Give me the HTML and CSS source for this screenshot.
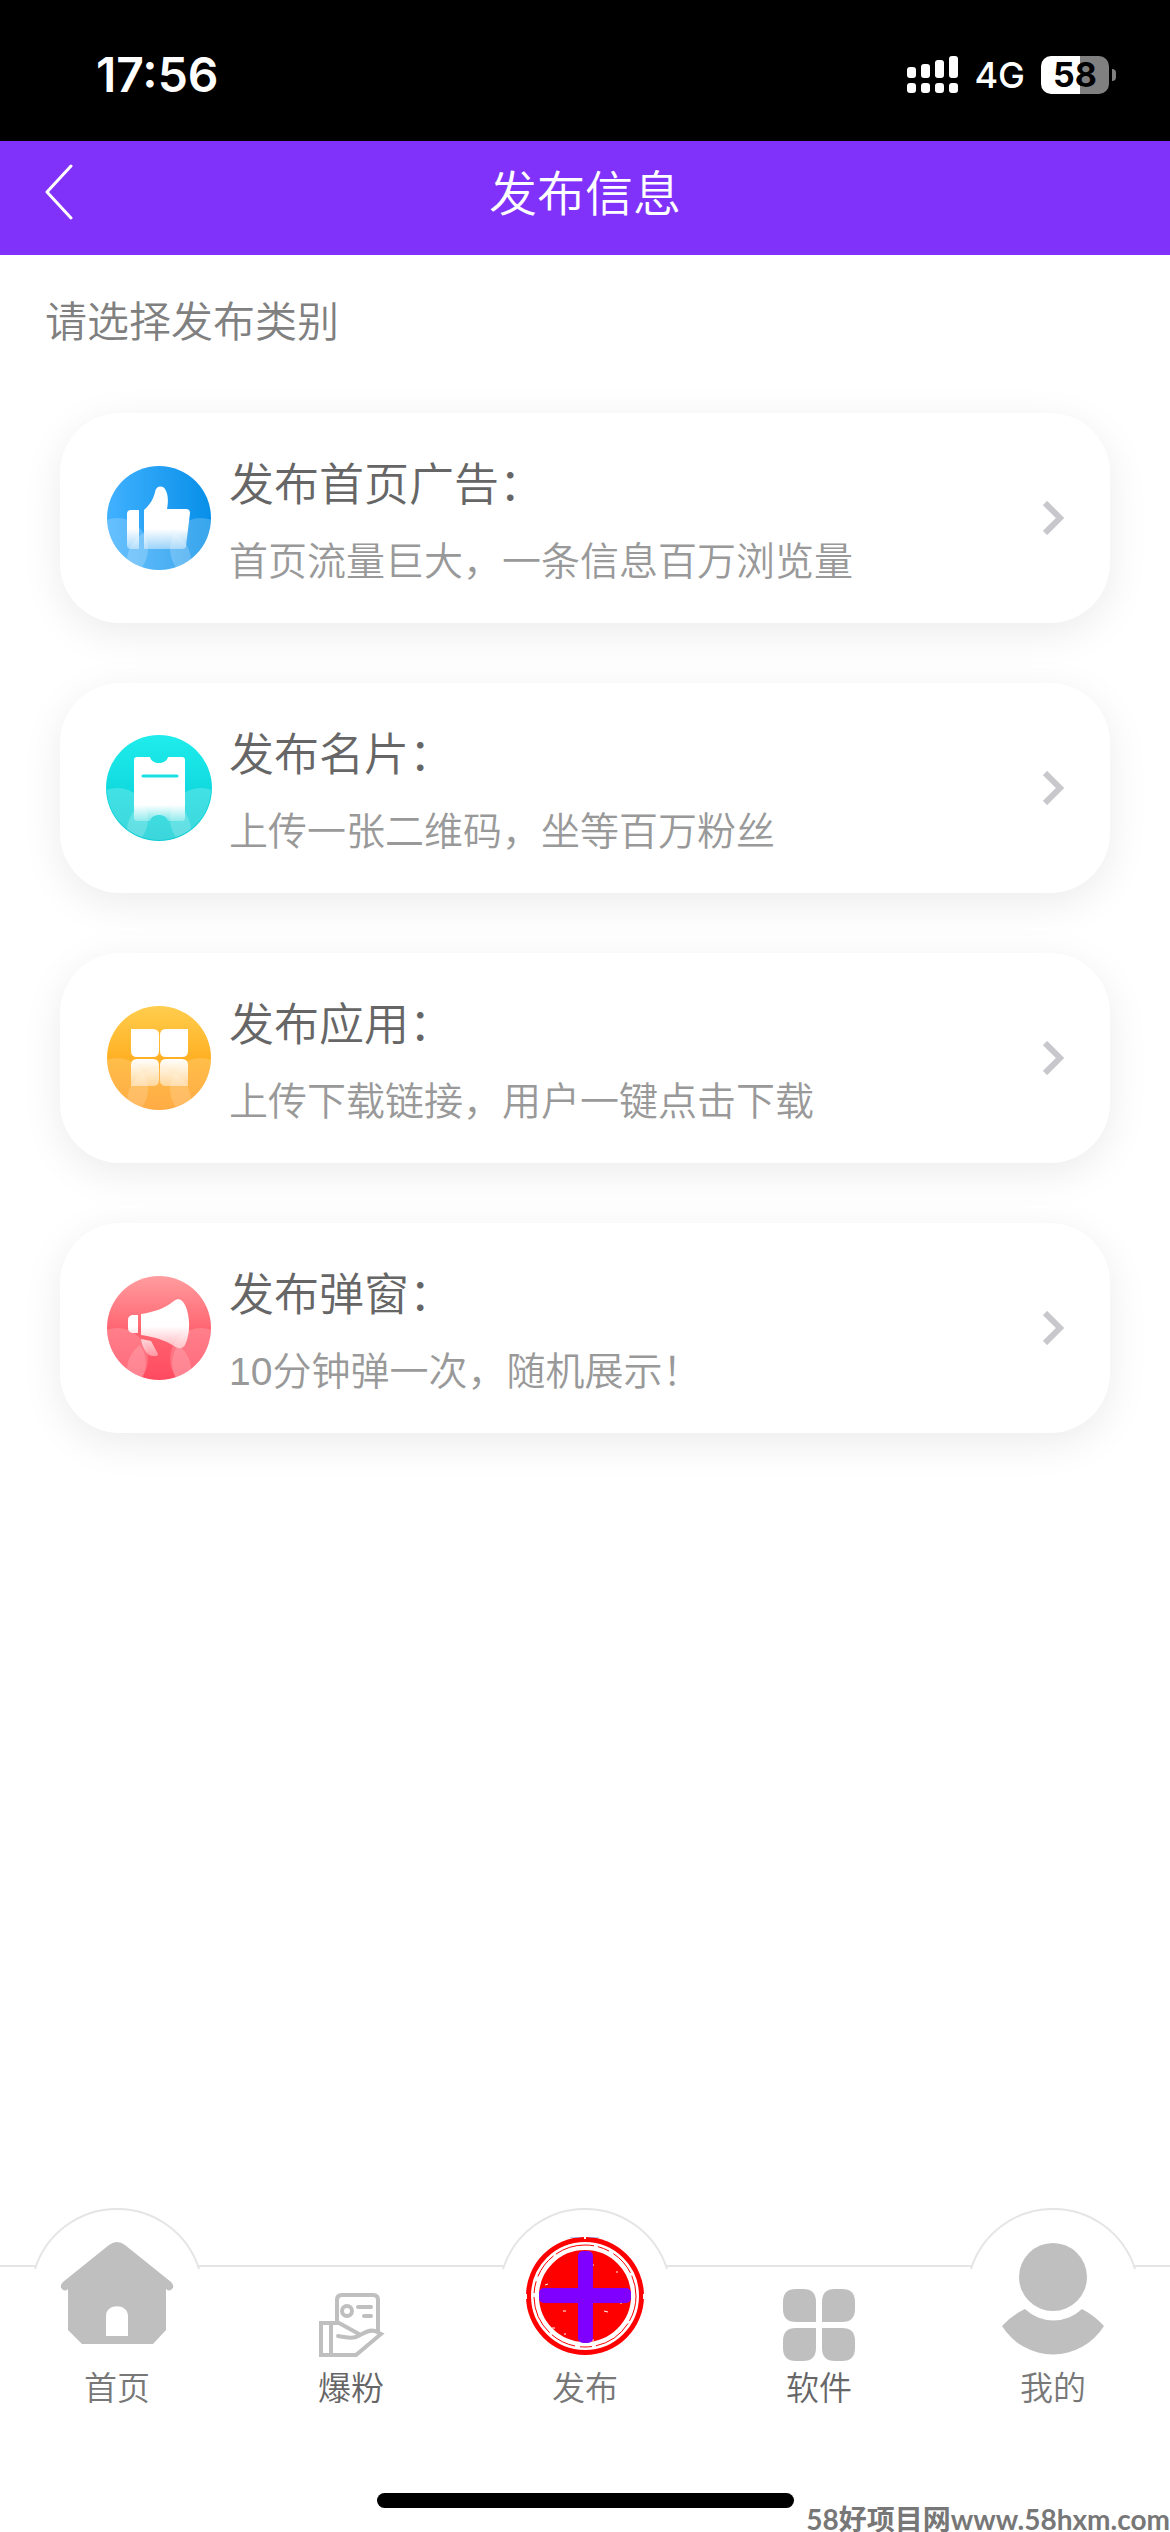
FILE: index.html
```
<!DOCTYPE html>
<html lang="zh-CN">
<head>
  <meta charset="UTF-8">
  <meta name="viewport" content="width=device-width, initial-scale=1.0">
  <title>发布信息</title>
  <link rel="stylesheet" href="styles.css">
</head>
<body>

  <div class="status-bar">
    <span class="time">17:56</span>
    <div class="status-right">
      <svg class="signal" viewBox="0 0 51 37" fill="#fff">
        <rect x="0" y="11" width="9" height="11" rx="3"/>
        <rect x="14" y="8" width="9" height="14" rx="3"/>
        <rect x="28" y="4" width="9" height="18" rx="3"/>
        <rect x="42" y="0" width="9" height="22" rx="3"/>
        <rect x="0" y="27" width="9" height="10" rx="3"/>
        <rect x="14" y="27" width="9" height="10" rx="3"/>
        <rect x="28" y="27" width="9" height="10" rx="3"/>
        <rect x="42" y="27" width="9" height="10" rx="3"/>
      </svg>
      <span class="network">4G</span>
      <span class="battery">58</span>
    </div>
  </div>

  <header class="header">
    <a class="back" href="#" aria-label="返回">
      <svg viewBox="0 0 28 56" fill="none" stroke="#fff" stroke-width="3" stroke-linecap="round" stroke-linejoin="round">
        <path d="M26 2L2 28l24 26"/>
      </svg>
    </a>
    <h1>发布信息</h1>
  </header>

  <main class="content">
    <p class="hint">请选择发布类别</p>

    <div class="card-list">
      <a class="card" href="#">
        <svg class="card-icon" viewBox="0 0 108 108">
          <defs>
            <clipPath id="round"><circle cx="54" cy="54" r="52"/></clipPath>
            <linearGradient id="blue"><stop offset="0" stop-color="#41b1ff"/><stop offset="1" stop-color="#078fe8"/></linearGradient>
            <linearGradient id="fadeBlue" gradientUnits="userSpaceOnUse" x1="0" y1="65" x2="0" y2="86"><stop offset="0" stop-color="#fff"/><stop offset="1" stop-color="#fff" stop-opacity=".4"/></linearGradient>
          </defs>
          <circle cx="54" cy="54" r="52" fill="url(#blue)"/>
          <g clip-path="url(#round)" fill="#fff" fill-opacity=".2">
            <circle cx="12" cy="85" r="31"/>
            <circle cx="96" cy="85" r="31"/>
            <circle cx="54" cy="97" r="32"/>
          </g>
          <g fill="url(#fadeBlue)">
            <path d="M34 46v39h-8q-4 0-4-4V50q0-4 4-4z"/>
            <path d="M39 46c7-6 10-13 11-18 1-6 7-7 10-3 4 6 3 15 2 20h19q4 0 4 4l-4 33q0 3-4 3H39z"/>
          </g>
        </svg>
        <div class="card-text">
          <h2>发布首页广告：</h2>
          <p>首页流量巨大，一条信息百万浏览量</p>
        </div>
        <svg class="arrow" viewBox="0 0 22 34"><path d="M2 2l15 15L2 32" fill="none" stroke="#c7c7cc" stroke-width="6"/></svg>
      </a>

      <a class="card" href="#">
        <svg class="card-icon" viewBox="0 0 108 108">
          <defs>
            <linearGradient id="teal" x2="0" y2="1"><stop offset="0" stop-color="#1feceb"/><stop offset=".5" stop-color="#12dbe0"/><stop offset="1" stop-color="#0bccd2"/></linearGradient>
            <linearGradient id="fadeTeal" gradientUnits="userSpaceOnUse" x1="0" y1="71" x2="0" y2="87"><stop offset="0" stop-color="#fff"/><stop offset="1" stop-color="#fff" stop-opacity=".3"/></linearGradient>
          </defs>
          <circle cx="54" cy="54" r="53" fill="url(#teal)"/>
          <g clip-path="url(#round)" fill="#fff" fill-opacity=".2">
            <circle cx="12" cy="85" r="31"/>
            <circle cx="96" cy="85" r="31"/>
            <circle cx="54" cy="97" r="32"/>
          </g>
          <path fill="url(#fadeTeal)" d="M32 23h13c2 8 16 8 18 0h14q3 0 3 3v58q0 3-3 3H63c-2-8-16-8-18 0H32q-3 0-3-3V26q0-3 3-3z"/>
          <path d="M38 42h34" stroke="#17dfe2" stroke-width="3" stroke-linecap="round"/>
        </svg>
        <div class="card-text">
          <h2>发布名片：</h2>
          <p>上传一张二维码，坐等百万粉丝</p>
        </div>
        <svg class="arrow" viewBox="0 0 22 34"><path d="M2 2l15 15L2 32" fill="none" stroke="#c7c7cc" stroke-width="6"/></svg>
      </a>

      <a class="card" href="#">
        <svg class="card-icon" viewBox="0 0 108 108">
          <defs>
            <linearGradient id="yellow" x2="0" y2="1"><stop offset="0" stop-color="#ffcd4d"/><stop offset=".5" stop-color="#ffb125"/><stop offset="1" stop-color="#ff9b1f"/></linearGradient>
            <linearGradient id="fadeYellow" gradientUnits="userSpaceOnUse" x1="0" y1="55" x2="0" y2="83"><stop offset="0" stop-color="#fff"/><stop offset="1" stop-color="#fff" stop-opacity=".45"/></linearGradient>
          </defs>
          <circle cx="54" cy="54" r="52" fill="url(#yellow)"/>
          <g clip-path="url(#round)" fill="#fff" fill-opacity=".17">
            <circle cx="12" cy="85" r="31"/>
            <circle cx="96" cy="85" r="31"/>
            <circle cx="54" cy="97" r="32"/>
          </g>
          <g fill="url(#fadeYellow)">
            <path d="M26 25h22q6 0 6 6v16q0 6-6 6H32q-6 0-6-6z"/>
            <path d="M83 25v22q0 6-6 6H61q-6 0-6-6V31q0-6 6-6z"/>
            <path d="M26 82V61q0-6 6-6h16q6 0 6 6v15q0 6-6 6z"/>
            <path d="M83 82H61q-6 0-6-6V61q0-6 6-6h16q6 0 6 6z"/>
          </g>
        </svg>
        <div class="card-text">
          <h2>发布应用：</h2>
          <p>上传下载链接，用户一键点击下载</p>
        </div>
        <svg class="arrow" viewBox="0 0 22 34"><path d="M2 2l15 15L2 32" fill="none" stroke="#c7c7cc" stroke-width="6"/></svg>
      </a>

      <a class="card" href="#">
        <svg class="card-icon" viewBox="0 0 108 108">
          <defs>
            <linearGradient id="red" x2="0" y2="1"><stop offset="0" stop-color="#ff9d9f"/><stop offset=".5" stop-color="#ff6672"/><stop offset="1" stop-color="#ff4a60"/></linearGradient>
            <linearGradient id="fadeRed" gradientUnits="userSpaceOnUse" x1="0" y1="52" x2="0" y2="86"><stop offset="0" stop-color="#fff"/><stop offset="1" stop-color="#fff" stop-opacity=".3"/></linearGradient>
          </defs>
          <circle cx="54" cy="54" r="52" fill="url(#red)"/>
          <g clip-path="url(#round)" fill="#fff" fill-opacity=".17">
            <circle cx="12" cy="85" r="31"/>
            <circle cx="96" cy="85" r="31"/>
            <path d="M22 97a32 32 0 0 1 13-26 31 31 0 0 1 2 33zM86 97a32 32 0 0 0-13-26 31 31 0 0 0-2 33z"/>
          </g>
          <g fill="url(#fadeRed)">
            <path d="M33 41v18h-6q-4-1-4-5v-8q0-4 4-5z"/>
            <path d="M36 40c14-2 24-6 33-13 4-3 8-2 11 4 5 10 6 28 0 40-2 4-7 4-11 1-9-6-20-9-33-11z"/>
            <path d="M36 65l10 2 7 13q0 2-3 2h-3q-3 0-5-3-5-6-6-14z"/>
          </g>
        </svg>
        <div class="card-text">
          <h2>发布弹窗：</h2>
          <p>10分钟弹一次，随机展示！</p>
        </div>
        <svg class="arrow" viewBox="0 0 22 34"><path d="M2 2l15 15L2 32" fill="none" stroke="#c7c7cc" stroke-width="6"/></svg>
      </a>
    </div>
  </main>

  <nav class="tab-bar">
    <a class="tab" href="#">
      <svg class="bump" viewBox="0 0 170 62"><path d="M3 61A86 86 0 0 1 167 61" fill="#fff" stroke="#e5e5e5" stroke-width="2"/></svg>
      <svg class="icon-big" viewBox="0 0 124 124" fill="#bfbfbf">
        <path fill-rule="evenodd" d="M54 8q8-6 16 0l46 37q4 4 1 7-3 3-6 0v41L98 107H27L13 93V52q-3 3-6 0-3-3 1-7zM51 99h22V79c0-13-22-13-22 0z"/>
      </svg>
      <span>首页</span>
    </a>
    <a class="tab tab-small" href="#">
      <svg class="icon-small" viewBox="0 0 72 72" fill="none" stroke="#bfbfbf" stroke-width="4" stroke-linecap="round">
        <path d="M22 33V11q0-5 5-5h31q5 0 5 5v31"/>
        <circle cx="32" cy="22" r="5"/>
        <path d="M43 18h13M49 27h7"/>
        <path d="M23 47c8 1 12 3 18 1 7-3 12-8 19-6l6 3-25 21H6V34h18l20 11M16 34v31"/>
      </svg>
      <span>爆粉</span>
    </a>
    <a class="tab" href="#">
      <svg class="bump" viewBox="0 0 170 62"><path d="M3 61A86 86 0 0 1 167 61" fill="#fff" stroke="#e5e5e5" stroke-width="2"/></svg>
      <svg class="icon-big" viewBox="0 0 124 124">
        <circle cx="62" cy="59" r="59" fill="#f00"/>
        <circle cx="62" cy="59" r="50" fill="none" stroke="#fff" stroke-width="8"/>
        <circle cx="62" cy="59" r="51" fill="none" stroke="#f00" stroke-width="1" stroke-dasharray="26 3 40 4 12 5"/>
        <path d="M47 0h11M66 0h10" stroke="#6a9cf5"/>
        <path d="M62 0v2M3 57v5M121 57v5" stroke="#fff" stroke-width="2"/>
        <path d="M69 28h2M93 35h2M22 48l3-1M40 74h3M81 74l4 1M97 66h2M29 91h3M41 97h2M69 103h2" stroke="#fff"/>
        <rect x="55" y="14" width="15" height="92" rx="5" fill="#8000ff"/>
        <rect x="16" y="51" width="92" height="15" rx="5" fill="#8000ff"/>
      </svg>
      <span>发布</span>
    </a>
    <a class="tab tab-small" href="#">
      <svg class="icon-small" viewBox="0 0 72 72" fill="#bfbfbf">
        <path d="M13 0h7q13 0 13 13v20H13Q0 33 0 20v-7Q0 0 13 0z"/>
        <path d="M52 0h7q13 0 13 13v7q0 13-13 13H39V13Q39 0 52 0z"/>
        <path d="M13 39h20v20q0 13-13 13h-7Q0 72 0 59v-7q0-13 13-13z"/>
        <path d="M39 39h20q13 0 13 13v7q0 13-13 13h-7q-13 0-13-13z"/>
      </svg>
      <span>软件</span>
    </a>
    <a class="tab" href="#">
      <svg class="bump" viewBox="0 0 170 62"><path d="M3 61A86 86 0 0 1 167 61" fill="#fff" stroke="#e5e5e5" stroke-width="2"/></svg>
      <svg class="icon-big" viewBox="0 0 124 124" fill="#bfbfbf">
        <circle cx="62" cy="40" r="34"/>
        <path d="M34 72a41 41 0 0 0 57 0q13 7 22 17a60 60 0 0 1-102 0q10-11 23-17z"/>
      </svg>
      <span>我的</span>
    </a>
  </nav>

  <footer class="home-area">
    <div class="home-indicator"></div>
    <span class="watermark">58好项目网www.58hxm.com</span>
  </footer>

</body>
</html>
```
FILE: styles.css
```
* { box-sizing: border-box; }
body { font-family: "Liberation Sans", "Noto Sans CJK SC", sans-serif; font-weight: 350; margin: 0; min-height: 100vh; display: flex; flex-direction: column; background: #fff; color: #666; }
h1, h2, p { margin: 0; font-weight: 350; }
a { color: inherit; text-decoration: none; }
svg { display: block; flex: none; }

.status-bar { display: flex; justify-content: space-between; align-items: center; height: 141px; padding: 8px 61px 0 96px; background: #000; color: #fff; font-family: Inter, sans-serif; }
.time { font-size: 48px; font-weight: 600; }
.status-right { display: flex; align-items: center; }
.signal { width: 51px; height: 37px; }
.network { font-size: 36px; font-weight: 500; margin: 0 16px; }
.battery { position: relative; width: 68px; height: 38px; line-height: 38px; border-radius: 10px; background: linear-gradient(to right, #fff 39px, #808080 39px); color: #000; font-size: 34px; font-weight: 700; text-align: center; }
.battery::after { content: ""; position: absolute; left: 71px; top: 13px; width: 4px; height: 12px; border-radius: 0 6px 6px 0; background: #808080; }

.header { display: grid; grid-template-columns: 120px 1fr 120px; align-items: center; height: 114px; padding-bottom: 12px; background: #8132fa; color: #fff; }
.back { padding-left: 45px; }
.back svg { width: 28px; height: 56px; }
.header h1 { padding-top: 6px; font-size: 48px; line-height: 66px; text-align: center; }

.hint { padding: 36px 45px 28px; font-size: 42px; line-height: 64px; color: #808080; }
.card-list { display: flex; flex-direction: column; gap: 60px; padding: 30px 60px; }
.card { display: flex; align-items: center; height: 210px; padding: 0 45px; border-radius: 60px; background: #fff; box-shadow: 0 10px 40px rgba(0, 0, 0, 0.08); }
.card-icon { width: 108px; height: 108px; }
.card-text { flex: 1; padding: 12px 0 0 16px; }
.card h2 { font-size: 45px; line-height: 76px; }
.card p { font-size: 39px; line-height: 76px; color: #999; }
.arrow { width: 22px; height: 34px; }

.tab-bar { position: relative; display: grid; grid-template-columns: repeat(5, 1fr); height: 209px; margin-top: auto; }
.tab-bar::before { content: ""; position: absolute; top: 57px; left: 0; right: 0; height: 2px; background: #e5e5e5; }
.tab { position: relative; display: flex; flex-direction: column; align-items: center; justify-content: flex-end; font-size: 33px; line-height: 56px; color: #777; }
.tab-small { color: #666; }
/* rounded hump that lifts the tab above the line */
.bump { position: absolute; top: 0; left: 50%; width: 170px; height: 62px; margin-left: -85px; }
.icon-big { position: relative; width: 124px; height: 124px; }
.icon-small { width: 72px; height: 72px; }

.home-area { position: relative; height: 115px; padding-top: 76px; }
.home-indicator { width: 417px; height: 15px; margin: 0 auto; border-radius: 8px; background: #000; }
.watermark { position: absolute; right: 0; bottom: 0; font-family: Lato, "Noto Sans CJK SC", sans-serif; font-size: 28px; line-height: 26px; font-weight: 700; color: #777; white-space: nowrap; }
```
